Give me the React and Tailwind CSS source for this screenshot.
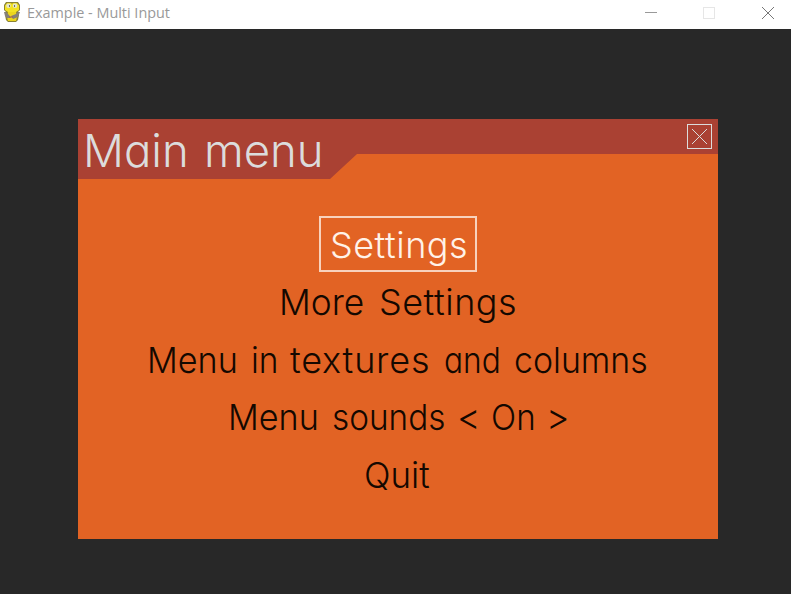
import React from 'react';

const rows = [
  { id: 'more', words: [['More', 'w-[85px]', 'scale-x-[0.98]'], ['Settings', 'w-[135px]', 'tracking-[0.5px]']] },
  { id: 'textures', words: [['Menu', 'w-[89px]', 'scale-x-[0.95]'], ['in', 'w-[24px]', 'scale-x-[0.93]'], ['textures', 'w-[139px]', 'tracking-[0.8px]'], ['and', 'w-[55px]', 'scale-x-[0.88]'], ['columns', 'w-[132px]', 'scale-x-[0.94]']] },
  { id: 'sounds', words: [['Menu', 'w-[89px]', 'scale-x-[0.95]'], ['sounds', 'w-[112px]', 'scale-x-[0.925]'], ['<', 'w-[17px]', '-ml-[2px] mr-[2px]'], ['On', 'w-[42px]', 'scale-x-[0.92]'], ['>', 'w-[17px]', '-ml-[2px] mr-[2px]']] },
  { id: 'quit', words: [['Quit', 'w-[65px]', 'scale-x-[0.97]']] },
];

function Snake() {
  return (
    <svg width="20" height="22" viewBox="0 0 20 22">
      <path d="M4 1h12l2 3v5l-2 2 1 3-1 5-2 2H6l-2-2-1-5 1-3-2-2V4z" fill="#8a8235" />
      <path d="M5 2h4l1 1 1-1h4l2 2.500V9l-3 2H6L3 9V4.500z" fill="#f3e222" />
      <path d="M6 11h8l1 5-1 4H6l-1-4z" fill="#ecd51c" />
      <ellipse cx="6.500" cy="4.800" rx="2.300" ry="2.200" fill="#e3e4cf" />
      <ellipse cx="13" cy="4.800" rx="2.300" ry="2.200" fill="#e3e4cf" />
      <path d="M7 4h1v2H7zM12 4h1v2h-1z" fill="#74735a" />
      <path d="M2 11h2l3 3 2 3H5l-2-2zM18 11h-2l-2 2-5 2 2 3 5-2z" fill="#858079" />
      <path d="M7 16h4" stroke="#a75b4a" />
    </svg>
  );
}

export default function App() {
  return (
    <div className="flex h-[594px] w-[791px] flex-col overflow-hidden bg-[#282828]">
      <header className="flex h-[29px] shrink-0 items-start bg-white">
        <div className="ml-[2px] mt-px"><Snake /></div>
        <span className="ml-[5px] mt-[3px] font-['Open_Sans',sans-serif] text-[14.4px] leading-5 text-[#999]">Example - Multi Input</span>
        <svg className="ml-auto" width="171" height="29" fill="none" shapeRendering="crispEdges">
          <path d="M25 12.5h12" stroke="#999" />
          <rect x="83.500" y="7.500" width="11" height="11" stroke="#e6e6e6" />
          <path d="M142 7l12 12M154 7l-12 12" stroke="#777" shapeRendering="auto" />
        </svg>
      </header>
      <main className="ml-[78px] mt-[90px] h-[420px] w-[640px] bg-[#e26324] font-['Inter',sans-serif] text-[36px] font-light leading-[58px] text-[#140800] [font-feature-settings:'cv11','ss03']">
        <div className="flex h-[60px] justify-between bg-[#aa4133] text-[#dcdcdc] [clip-path:polygon(0_0,100%_0,100%_35px,279px_35px,252px_60px,0_60px)]">
          <h1 className="ml-[5px] flex gap-5 text-[45.500px] font-light leading-[63px]">
            <span className="w-[101px] origin-left whitespace-nowrap">Main</span>
            <span className="w-[115px] origin-left whitespace-nowrap">menu</span>
          </h1>
          <svg className="mr-[5px] mt-1" width="27" height="27" fill="none" stroke="#dcdcdc">
            <rect x="1.500" y="1.500" width="24" height="24" />
            <path d="M6 6l15 15M21 6L6 21" />
          </svg>
        </div>
        <div className="flex flex-col items-center">
          <div className="mb-px mt-[37px] flex h-[56px] w-[158px] justify-center border-2 border-[#f8d2bd] text-[#fff2e8]">
            <span className="w-[136px] whitespace-nowrap leading-[54px] tracking-[0.5px]">Settings</span>
          </div>
          {rows.map((row) => (
            <div key={row.id} className="mr-[3px] flex h-[57.5px] gap-[15px]">
              {row.words.map(([word, width, fit]) => (
                <span key={word} className={`origin-left whitespace-nowrap ${width} ${fit}`}>{word}</span>
              ))}
            </div>
          ))}
        </div>
      </main>
    </div>
  );
}
